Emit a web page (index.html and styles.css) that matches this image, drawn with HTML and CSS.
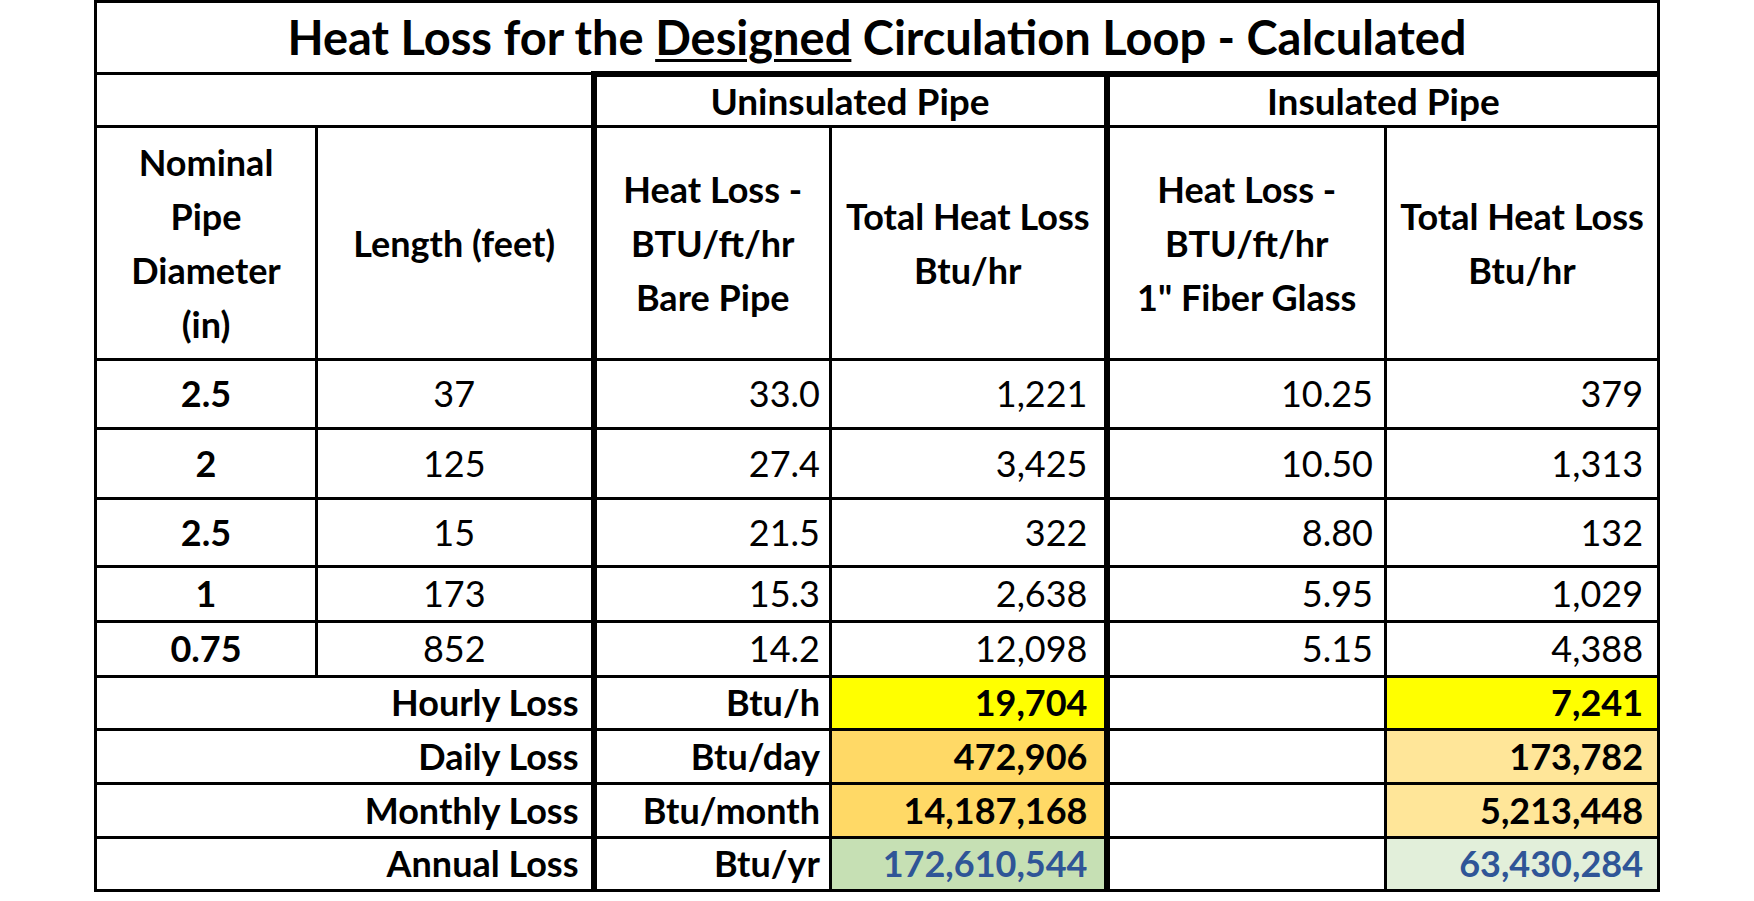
FILE: index.html
```html
<!DOCTYPE html>
<html lang="en">
<head>
<meta charset="utf-8">
<title>Heat Loss for the Designed Circulation Loop - Calculated</title>
<link rel="stylesheet" href="styles.css">
</head>
<body>
<table class="loss">
  <colgroup>
    <col class="c1"><col class="c2"><col class="c3"><col class="c4"><col class="c5"><col class="c6">
  </colgroup>
  <tr class="r-title">
    <th colspan="6" class="title">Heat Loss for the <u>Designed</u> Circulation Loop - Calculated</th>
  </tr>
  <tr class="r-group">
    <th colspan="2"></th>
    <th colspan="2" class="grp thick-l">Uninsulated Pipe</th>
    <th colspan="2" class="grp thick-l">Insulated Pipe</th>
  </tr>
  <tr class="r-head">
    <th>Nominal<br>Pipe<br>Diameter<br>(in)</th>
    <th>Length (feet)</th>
    <th class="thick-l">Heat Loss -<br>BTU/ft/hr<br>Bare Pipe</th>
    <th>Total Heat Loss<br>Btu/hr</th>
    <th class="thick-l">Heat Loss -<br>BTU/ft/hr<br>1" Fiber Glass</th>
    <th>Total Heat Loss<br>Btu/hr</th>
  </tr>
  <tr class="r-d1">
    <td class="dia">2.5</td><td class="len">37</td><td class="num k3 thick-l">33.0</td><td class="num k4">1,221</td><td class="num k5 thick-l">10.25</td><td class="num k6">379</td>
  </tr>
  <tr class="r-d2">
    <td class="dia">2</td><td class="len">125</td><td class="num k3 thick-l">27.4</td><td class="num k4">3,425</td><td class="num k5 thick-l">10.50</td><td class="num k6">1,313</td>
  </tr>
  <tr class="r-d3">
    <td class="dia">2.5</td><td class="len">15</td><td class="num k3 thick-l">21.5</td><td class="num k4">322</td><td class="num k5 thick-l">8.80</td><td class="num k6">132</td>
  </tr>
  <tr class="r-d4">
    <td class="dia">1</td><td class="len">173</td><td class="num k3 thick-l">15.3</td><td class="num k4">2,638</td><td class="num k5 thick-l">5.95</td><td class="num k6">1,029</td>
  </tr>
  <tr class="r-d5">
    <td class="dia">0.75</td><td class="len">852</td><td class="num k3 thick-l">14.2</td><td class="num k4">12,098</td><td class="num k5 thick-l">5.15</td><td class="num k6">4,388</td>
  </tr>
  <tr class="r-s1">
    <td colspan="2" class="lbl">Hourly Loss</td><td class="unit k3 thick-l">Btu/h</td><td class="val k4 yellow">19,704</td><td class="thick-l"></td><td class="val k6 yellow">7,241</td>
  </tr>
  <tr class="r-s2">
    <td colspan="2" class="lbl">Daily Loss</td><td class="unit k3 thick-l">Btu/day</td><td class="val k4 gold">472,906</td><td class="thick-l"></td><td class="val k6 gold-lt">173,782</td>
  </tr>
  <tr class="r-s3">
    <td colspan="2" class="lbl">Monthly Loss</td><td class="unit k3 thick-l">Btu/month</td><td class="val k4 gold">14,187,168</td><td class="thick-l"></td><td class="val k6 gold-lt">5,213,448</td>
  </tr>
  <tr class="r-s4">
    <td colspan="2" class="lbl">Annual Loss</td><td class="unit k3 thick-l">Btu/yr</td><td class="val k4 green blue">172,610,544</td><td class="thick-l"></td><td class="val k6 green-lt blue">63,430,284</td>
  </tr>
</table>
</body>
</html>
```

FILE: styles.css
```css
html, body {
  margin: 0;
  padding: 0;
  background: #ffffff;
}

body {
  font-family: Lato, "Liberation Sans", sans-serif;
  color: #000000;
}

.loss {
  border-collapse: collapse;
  table-layout: fixed;
  width: 1563px;
  margin-left: 94px;
  margin-top: 0;
}

.c1 { width: 221px; }
.c2 { width: 277px; }
.c3 { width: 237px; }
.c4 { width: 276px; }
.c5 { width: 279px; }
.c6 { width: 273px; }

.loss th,
.loss td {
  border: 3px solid #000000;
  padding: 0 12px;
  font-size: 36px;
  line-height: 1.2;
  white-space: nowrap;
  overflow: hidden;
}

.loss th {
  font-weight: 700;
  text-align: center;
}

.loss td {
  font-weight: 400;
}

.title {
  font-size: 47px !important;
  font-weight: 700;
  border-bottom-width: 3px;
}

.title u {
  text-decoration-thickness: 3px;
  text-underline-offset: 4px;
}

.grp {
  border-top: 6px solid #000000 !important;
  font-size: 37px !important;
}

.thick-l {
  border-left: 6px solid #000000 !important;
}

.r-head th {
  line-height: 54px;
}

.r-title { height: 72px; }
.r-group { height: 53px; }
.r-head { height: 233px; }
.r-d1 { height: 69px; }
.r-d2 { height: 70px; }
.r-d3 { height: 68px; }
.r-d4 { height: 55px; }
.r-d5 { height: 55px; }
.r-s1 { height: 53px; }
.r-s2 { height: 54px; }
.r-s3 { height: 54px; }
.r-s4 { height: 53px; }

.dia {
  text-align: center;
  font-weight: 700 !important;
}

.len {
  text-align: center;
}

.num {
  text-align: right;
}

.k3 { padding-right: 9px !important; }
.k4 { padding-right: 16px !important; }
.k5 { padding-right: 11px !important; }
.k6 { padding-right: 14px !important; }

.lbl,
.unit,
.val {
  text-align: right;
  font-weight: 700 !important;
}

.yellow { background: #ffff00; }
.gold { background: #ffd966; }
.gold-lt { background: #ffe699; }
.green { background: #c6e0b4; }
.green-lt { background: #e2efda; }
.blue { color: #2f5597; }
```
